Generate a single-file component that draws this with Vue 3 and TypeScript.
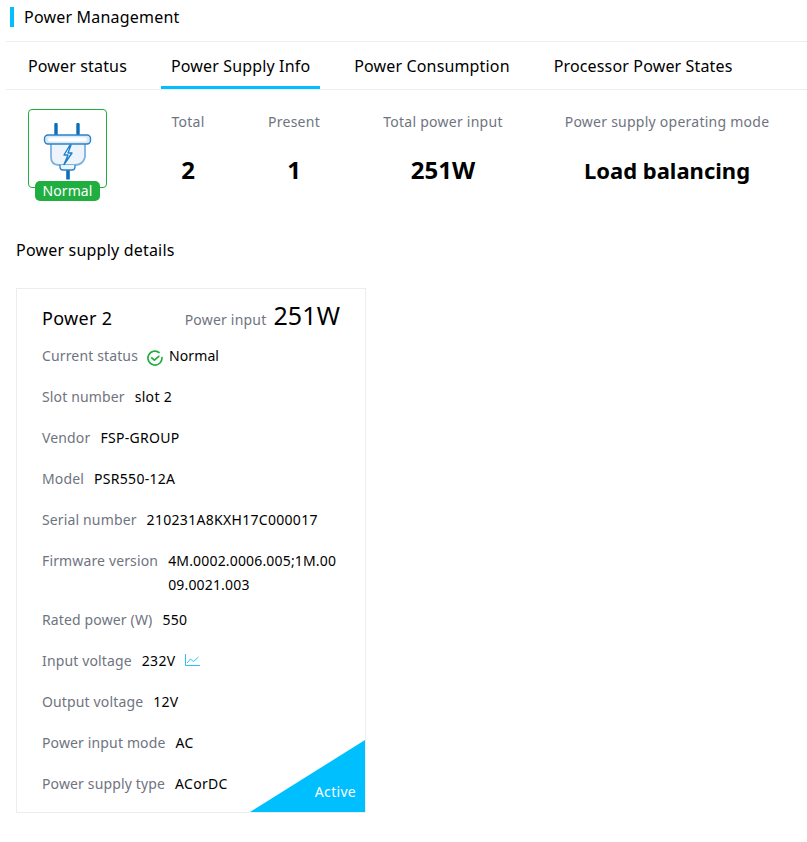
<script setup lang="ts">
interface Row { label: string; value: string; wrap?: boolean; chart?: boolean }
const tabs = ['Power status', 'Power Supply Info', 'Power Consumption', 'Processor Power States']
const stats = [
  { label: 'Total', value: '2', w: 'a' },
  { label: 'Present', value: '1', w: 'b' },
  { label: 'Total power input', value: '251W', w: 'c' },
  { label: 'Power supply operating mode', value: 'Load balancing', w: 'd' },
]
const rows: Row[] = [
  { label: 'Slot number', value: 'slot 2' },
  { label: 'Vendor', value: 'FSP-GROUP' },
  { label: 'Model', value: 'PSR550-12A' },
  { label: 'Serial number', value: '210231A8KXH17C000017' },
  { label: 'Firmware version', value: '4M.0002.0006.005;1M.0009.0021.003', wrap: true },
  { label: 'Rated power (W)', value: '550' },
  { label: 'Input voltage', value: '232V', chart: true },
  { label: 'Output voltage', value: '12V' },
  { label: 'Power input mode', value: 'AC' },
  { label: 'Power supply type', value: 'ACorDC' },
]
</script>

<template>
  <div class="page">
    <header class="title"><span class="bar"></span><span>Power Management</span></header>
    <nav class="tabs">
      <span v-for="(t, i) in tabs" :key="t" class="tab" :class="{ on: i === 1 }">{{ t }}</span>
    </nav>
    <section class="summary">
      <div class="plug">
        <svg width="50" height="57" viewBox="0 0 50 57">
          <path d="M13 1.500v11M35 1.500v11" stroke="#0b6fb8" stroke-width="3.400" stroke-linecap="round" fill="none"/>
          <path d="M25 46v10.500" stroke="#0b6fb8" stroke-width="3.600" fill="none"/>
          <path d="M8 20v14q0 8 8 8h16q8 0 10-8V20" fill="#eef4fb" stroke="#7fb2dd" stroke-width="1.800"/>
          <path d="M17 42v2q0 3 3 3h9q3 0 3-3v-2" fill="#eef4fb" stroke="#2b82c9" stroke-width="1.300"/>
          <rect x="1.500" y="12" width="46" height="9" rx="3.500" fill="#dbe9f7" stroke="#2b82c9" stroke-width="1.400"/>
          <rect x="5" y="14.500" width="39" height="4" rx="2" fill="#fff"/>
          <path d="M27 22l-6 10h4l-4 9.500 8-11.500h-4l3-8z" fill="#fff" stroke="#1f7fca" stroke-width="1.400" stroke-linejoin="round"/>
        </svg>
        <span class="badge">Normal</span>
      </div>
      <div v-for="s in stats" :key="s.label" class="stat" :class="s.w">
        <span class="k">{{ s.label }}</span>
        <strong>{{ s.value }}</strong>
      </div>
    </section>
    <h2 class="sub">Power supply details</h2>
    <article class="card">
      <div class="head">
        <span class="name">Power 2</span>
        <span class="input"><span class="k">Power input</span><span class="big">251W</span></span>
      </div>
      <div class="row first">
        <span class="k">Current status</span>
        <svg class="ok" width="16" height="16" viewBox="0 0 16 16" fill="none" stroke="#1fae3f" stroke-width="1.700">
          <path d="M14.900 7A7 7 0 1 1 12.600 2.800"/>
          <path d="M4.800 7.800l2.600 2.400 4.400-3.800" stroke-linecap="round" stroke-linejoin="round"/>
        </svg>
        <span class="v">Normal</span>
      </div>
      <div v-for="r in rows" :key="r.label" class="row" :class="{ multi: r.wrap }">
        <span class="k">{{ r.label }}</span>
        <span class="v">{{ r.value }}</span>
        <svg v-if="r.chart" class="chart" width="15" height="12" viewBox="0 0 15 12" fill="none" stroke="#2ec2f7" stroke-width="1">
          <path d="M.5 0v11.500H15"/>
          <path d="M2 9l3.500-4 3 2.500L13.500 3"/>
        </svg>
      </div>
      <div class="corner"><span>Active</span></div>
    </article>
  </div>
</template>

<style scoped>
.page { width: 807px; height: 842px; background: #fff; color: #000; font-family: "Noto Sans", "Open Sans", sans-serif; font-size: 14px; overflow: hidden; box-sizing: border-box; padding-left: 6px; }
.title { display: flex; align-items: center; gap: 10px; padding: 0 0 7px 4px; font-size: 16px; letter-spacing: .2px; border-bottom: 1px solid #ecedf2; height: 34px; }
.bar { width: 4px; height: 20px; background: #00bfff; }
.tabs { display: flex; gap: 24px; padding-left: 12px; height: 47px; border-bottom: 1px solid #ecedf2; }
.tab { padding: 0 10px; font-size: 16px; letter-spacing: .15px; line-height: 48px; height: 44px; }
.tab.on { border-bottom: 3px solid #00bfff; }
.summary { display: flex; padding: 19px 0 0 22px; height: 137px; }
.plug { position: relative; width: 77px; height: 64px; border: 1px solid #1fae3f; border-radius: 4px; display: flex; justify-content: center; padding-top: 13px; }
.badge { position: absolute; left: 6px; top: 71px; width: 65px; height: 20px; background: #1fae3f; border-radius: 5px; color: #fff; text-align: center; line-height: 20px; font-size: 14px; letter-spacing: .1px; }
.stat { display: flex; flex-direction: column; align-items: center; }
.stat .k { font-size: 14px; letter-spacing: .25px; line-height: 24px; margin-top: 1px; }
.stat strong { font-size: 24px; font-weight: 700; line-height: 32px; margin-top: 20px; }
.d strong { font-size: 22px; }
.a { width: 74px; margin-left: 44px; }
.b { width: 72px; margin-left: 33px; }
.c { width: 140px; margin-left: 43px; }
.d { width: 210px; margin-left: 49px; }
.k { color: #6f7480; }
.sub { margin: 0; font-size: 16px; font-weight: 400; letter-spacing: .2px; line-height: 24px; padding-left: 10px; margin-top: -8px; }
.card { position: relative; width: 350px; height: 525px; box-sizing: border-box; border: 1px solid #ecedf2; margin: 26px 0 0 10px; padding: 9px 25px 0 25px; }
.head { display: flex; justify-content: space-between; align-items: baseline; }
.name { font-size: 18px; letter-spacing: .3px; }
.big { font-size: 25px; margin-left: 7px; letter-spacing: .1px; }
.input .k { font-size: 14px; letter-spacing: .2px; }
.row { display: flex; line-height: 24px; margin-top: 17px; font-size: 14px; align-items: flex-start; letter-spacing: .14px; }
.row.first { margin-top: 12px; }
.row .v { margin-left: 10px; letter-spacing: .3px; }
.row.first .v { margin-left: 9px; letter-spacing: .1px; }
.row.multi { margin-bottom: -6px; }
.row.multi .v { width: 170px; overflow-wrap: anywhere; letter-spacing: .17px; }
.ok { margin: 6px -3px 0 9px; }
.chart { margin: 5px 0 0 10px; }
.corner { position: absolute; right: 0; bottom: 0; width: 115px; height: 72px; background: #00bfff; clip-path: polygon(100% 0, 100% 100%, 0 100%); color: #fff; }
.corner span { position: absolute; right: 9px; bottom: 10px; line-height: 20px; letter-spacing: .3px; }
</style>
